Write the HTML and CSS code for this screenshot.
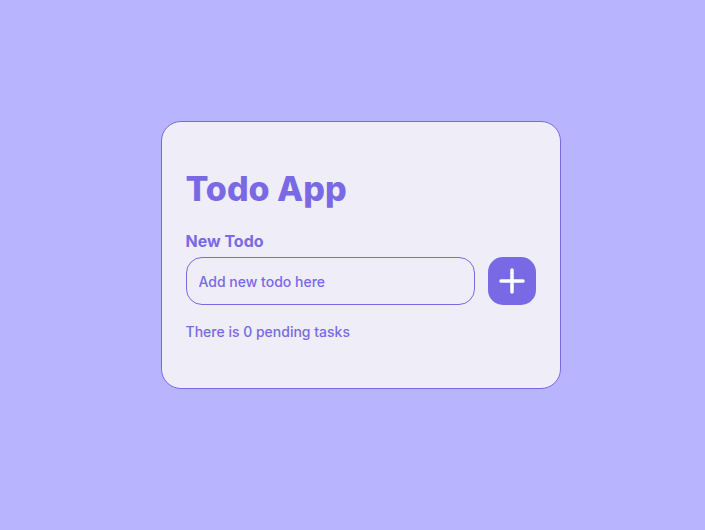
FILE: index.html
```html
<!DOCTYPE html>
<html>
<head>
<meta charset="utf-8">
<link rel="stylesheet" href="styles.css">
</head>
<body>
<main class="page">
  <section class="card">
    <h1 class="title">Todo App</h1>
    <label class="label" for="todo">New Todo</label>
    <div class="row">
      <input id="todo" class="input" type="text" placeholder="Add new todo here">
      <button class="add" aria-label="Add">
        <svg width="26" height="26" viewBox="0 0 26 26"><path d="M13 2v22M2 13h22" stroke="#fff" stroke-width="3.5" stroke-linecap="round"/></svg>
      </button>
    </div>
    <p class="status">There is 0 pending tasks</p>
  </section>
</main>
</body>
</html>
```
FILE: styles.css
```css
* { box-sizing: border-box; }
html, body { margin: 0; height: 100%; }
body {
  background: #b8b4fe;
  font-family: Inter, "Noto Sans", sans-serif;
  color: #7a69e4;
}
.page {
  height: 100%;
  display: flex;
  align-items: center;
  justify-content: center;
  padding: 0 0 20px 16px;
}
.card {
  width: 400px;
  height: 268px;
  background: #eeedf8;
  border: 1px solid #7a69e4;
  border-radius: 20px;
  padding: 46px 24px 0 24px;
  display: flex;
  flex-direction: column;
}
.title {
  margin: 0;
  font-size: 34px;
  font-weight: 800;
  line-height: 42px;
  letter-spacing: 0;
  color: #7a69e4;
}
.label {
  margin-top: 21px;
  font-size: 16px;
  font-weight: 700;
  line-height: 20px;
}
.row {
  margin-top: 6px;
  display: flex;
  gap: 13px;
}
.input {
  width: 290px;
  height: 48px;
  border: 1px solid #7a69e4;
  border-radius: 16px;
  background: transparent;
  padding: 0 12px;
  font-family: inherit;
  font-size: 14px;
  font-weight: 500;
  color: #7a69e4;
  outline: none;
}
.input::placeholder { color: #7a69e4; }
.add {
  width: 48px;
  height: 48px;
  border: none;
  border-radius: 15px;
  background: #7a69e4;
  display: flex;
  align-items: center;
  justify-content: center;
  padding: 0;
}
.status {
  margin: 19px 0 0;
  font-size: 14px;
  font-weight: 500;
  line-height: 16px;
}
```
